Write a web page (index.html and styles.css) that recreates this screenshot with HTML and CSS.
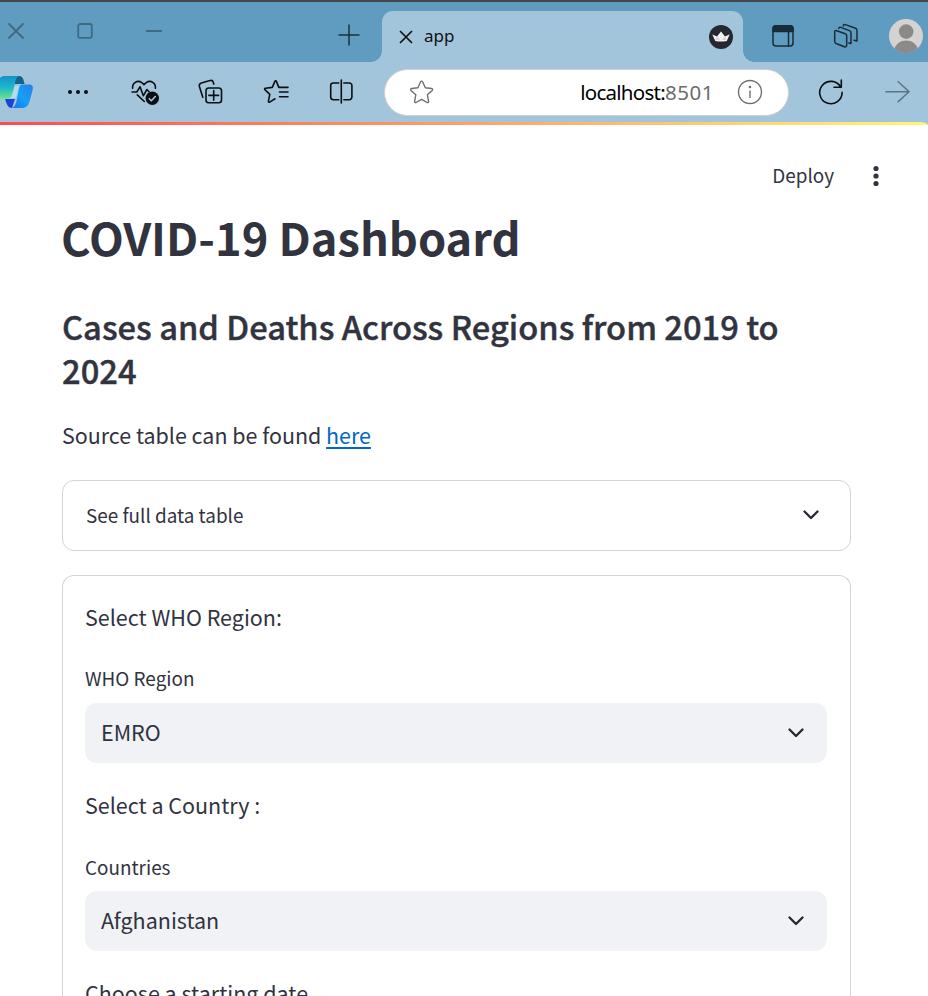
FILE: index.html
```html
<!DOCTYPE html>
<html lang="en">
<head>
<meta charset="utf-8">
<title>app</title>
<link rel="stylesheet" href="styles.css">
</head>
<body>
<div class="window">
  <div class="tabstrip">
    <div class="controls">
      <svg class="dim" width="16" height="16" viewBox="0 0 16 16"><path d="M1 1l14 14M15 1L1 15"/></svg>
      <svg class="dim" width="16" height="16" viewBox="0 0 16 16"><rect x="1.2" y="1" width="13.6" height="13.8" rx="1.8"/></svg>
      <svg class="dim" width="16" height="16" viewBox="0 0 16 16"><path d="M.5 8h15"/></svg>
    </div>
    <svg class="new-tab" width="22" height="22" viewBox="0 0 22 22"><path d="M11 .5v21M.5 11h21"/></svg>
    <div class="tab">
      <svg class="close" width="14" height="14" viewBox="0 0 14 14"><path d="M1 1l12 12M13 1L1 13"/></svg>
      <span class="tab-title">app</span>
      <svg width="24" height="24" viewBox="709 25 24 24"><circle cx="721" cy="37" r="12" fill="#262730"/><path d="M712.300 34.500l4.700 2.100 4-5.200 4 5.200 4.700-2.300-2.900 6.700q-5.700 1-11.500 0z" fill="#f3f3f4"/><path d="M717 36.600l3 3.200-4.500.2zM725 36.600l-3 3.200 4.500.2z" fill="#d3d3d7"/></svg>
    </div>
    <svg class="ink panel" width="24" height="24" viewBox="771 24 24 24"><rect x="773" y="25.700" width="20" height="20.300" rx="3"/><path d="M773 31.500v-2.800a3 3 0 0 1 3-3h14a3 3 0 0 1 3 3v2.800z" fill="#182c38"/><path d="M788.500 31v15"/></svg>
    <svg class="ink spaces" width="26" height="26" viewBox="833 23 26 26"><path d="M836 30.500l9.300 3.300a2 2 0 0 1 1.400 1.900v9.600a1.600 1.600 0 0 1-2.200 1.500l-8.500-3.300a2 2 0 0 1-1.300-1.900v-9.800a1.100 1.100 0 0 1 1.300-1.300zM838.700 28.500c.2-1.300 1-1.500 2.100-1.100l8.700 3.200a2.200 2.200 0 0 1 1.500 2.100V43.500l-2.200-.5M843.300 26c.1-1.600.9-1.800 2.100-1.400l10.100 3.700a2.200 2.200 0 0 1 1.500 2.100V41l-3-.8"/></svg>
    <svg class="avatar" width="34" height="34" viewBox="0 0 34 34"><circle cx="17" cy="17" r="17" fill="#d5d3d2"/><circle cx="17.200" cy="12.600" r="7.300" fill="#8c8a89"/><path d="M5.500 29.700c1.500-5 6-8.300 11.700-8.300s10.200 3.300 11.600 7.900a17 17 0 0 1-23.300.4z" fill="#8c8a89"/></svg>
  </div>
  <div class="toolbar">
    <svg class="copilot" width="34" height="34" viewBox="0 75 34 34">
      <defs>
        <linearGradient id="ca" x1="0" y1="0" x2="0" y2="1"><stop offset="0" stop-color="#1291cc"/><stop offset=".5" stop-color="#1cb8c8"/><stop offset="1" stop-color="#6ce58a"/></linearGradient>
        <linearGradient id="cb" x1="0" y1="1" x2="1" y2="0"><stop offset="0" stop-color="#1577ee"/><stop offset=".5" stop-color="#15a0f5"/><stop offset="1" stop-color="#2b7de8"/></linearGradient>
      </defs>
      <path d="M14 76h5c3 0 4.500 2 5.500 8h-10z" fill="#13638c"/>
      <path d="M5 99h10l-3 9c-4 0-5-3-7-9z" fill="#1b43d4"/>
      <path d="M0 78c1-1.500 3-2 5-2h15c-3 0-4 3-5 7l-3 11c-1 4-2 5-6 5H0z" fill="url(#ca)"/>
      <path d="M22 84.500h7c3.500 0 4.500 2 3.500 6l-3 11c-1.500 5-4 6.500-8 6.500h-10c3-.5 4-3 5-7l2-10c.7-4 1-6 3.500-6.500z" fill="url(#cb)"/>
      <path d="M15.500 86h4c-1.500 2-2.500 9-4 12h-4.500c1.500-3 3-9 4.500-12z" fill="#b3dcec"/>
    </svg>
    <svg class="dots" width="24" height="8" viewBox="0 0 24 8"><circle cx="4" cy="4" r="2"/><circle cx="12" cy="4" r="2"/><circle cx="20" cy="4" r="2"/></svg>
    <svg class="line heart" width="30" height="30" viewBox="130 77 30 30"><path d="M132.600 88.300c-.5-5 4.500-9 9.200-5.600l2.200 1.900 2.200-1.900c4.800-3.300 9.700.7 9.200 5.600M132 92h4.800l3.300-5.200 3.200 9 3.600-6.300 2.300 2.500M137.300 94.800l7 6.700"/><circle cx="152.300" cy="98.300" r="6.700" fill="#0b0f12" stroke="none"/><path d="M149.300 98.700l2 2 4-4.200" stroke="#a3c5db"/></svg>
    <svg class="line coll" width="28" height="30" viewBox="196 77 28 30"><rect x="206" y="88" width="15.500" height="14.800" rx="2.700"/><path d="M213.700 90.500v9.800M208.900 95.400h9.700M202.800 97.200l-3.400-10.700c-.5-1.800.2-3 1.900-3.600l8.700-2.400c1.600-.5 2.700.1 3.200 1.600l.6 2"/></svg>
    <svg class="line favs" width="28" height="30" viewBox="262 77 28 30"><path d="M279.500 87.500l-.7-.1-2.400-6c-.3-.8-1.200-.8-1.500 0l-2.600 6-6.900.8c-.8.100-1.100 1-.5 1.500l4.900 4.700-1.400 6.700c-.2.900.6 1.400 1.300 1l5.300-3.300M279.500 87.400h8.500M279.500 92h8.500M279.500 96.700h8.500"/></svg>
    <svg class="line split" width="28" height="30" viewBox="327 77 28 30"><path d="M338.800 83h-5.500a2.600 2.600 0 0 0-2.600 2.600v11.500a2.600 2.600 0 0 0 2.600 2.600h5.500M343.800 83h5.500a2.600 2.600 0 0 1 2.600 2.600v11.500a2.600 2.600 0 0 1-2.600 2.600h-5.500M341.300 80v23"/></svg>
    <div class="address">
      <svg class="grey" width="26" height="26" viewBox="409 79 26 26"><path d="M420.600 81.800c.4-.9 1.600-.9 2 0l2.700 5.900 6.300.8c1 .2 1.300 1.200.6 1.900l-4.800 4.400 1.200 6.500c.2 1-.7 1.600-1.500 1.200l-5.500-3.200-5.500 3.200c-.9.400-1.700-.2-1.500-1.200l1.200-6.500-4.800-4.400c-.7-.7-.4-1.700.6-1.900l6.300-.8z"/></svg>
      <span class="url">localhost:<span class="port">8501</span></span>
      <svg class="grey" width="26" height="26" viewBox="0 0 26 26"><circle cx="13" cy="13" r="11.500"/><path d="M13 11.500v7.500"/><circle cx="13" cy="8" r=".6"/></svg>
    </div>
    <svg class="line reload" width="28" height="28" viewBox="817 78 28 28"><path d="M840.800 87.300a11.200 11.200 0 1 0 1.300 5M841.300 80v7.300H834"/></svg>
    <svg class="forward" width="26" height="26" viewBox="884 78 26 26"><path d="M885.300 90.700H909M897.700 80.300l11.300 10.400-11.300 10.400"/></svg>
  </div>
  <div class="viewport-edge"><div class="stripe"></div></div>
  <div class="app">
    <header class="app-bar">
      <span class="deploy">Deploy</span>
      <svg class="menu" width="8" height="24" viewBox="0 0 8 24"><circle cx="4" cy="4.500" r="2.600"/><circle cx="4" cy="12" r="2.600"/><circle cx="4" cy="19.500" r="2.600"/></svg>
    </header>
    <main class="content">
      <h1>COVID-19 Dashboard</h1>
      <h2>Cases and Deaths Across Regions from 2019 to 2024</h2>
      <p class="source">Source table can be found <a href="#">here</a></p>
      <div class="expander">
        <span>See full data table</span>
        <svg class="chev" width="16" height="10" viewBox="0 0 16 10"><path d="M1.500 1.500L8 8l6.500-6.500"/></svg>
      </div>
      <section class="form">
        <p class="prompt">Select WHO Region:</p>
        <label class="region-label">WHO Region</label>
        <div class="select"><span>EMRO</span><svg class="chev" width="16" height="10" viewBox="0 0 16 10"><path d="M1.500 1.500L8 8l6.500-6.500"/></svg></div>
        <p class="prompt">Select a Country :</p>
        <label class="country-label">Countries</label>
        <div class="select"><span>Afghanistan</span><svg class="chev" width="16" height="10" viewBox="0 0 16 10"><path d="M1.500 1.500L8 8l6.500-6.500"/></svg></div>
        <p class="prompt">Choose a starting date</p>
      </section>
    </main>
  </div>
</div>
</body>
</html>
```
FILE: styles.css
```css
* { box-sizing: border-box; }
body { margin: 0; background: #fff; color: #31333f; font-family: "Noto Sans CJK SC", "Noto Sans", sans-serif; }
svg { display: block; flex: none; fill: none; }
.window { height: 996px; overflow: hidden; }

.tabstrip { display: flex; align-items: center; height: 62px; border-top: 2px solid #444649; background: #609cbf; padding: 7px 0 0 9px; }
.controls { display: flex; gap: 53px; margin: -9px 1px 0 -1px; }
.dim { stroke: #3f6a83; stroke-width: 1.8; stroke-linecap: round; }
.new-tab { margin: -1px 0 0 175px; stroke: #1d303b; stroke-width: 1.5; }
.tab { position: relative; display: flex; align-items: center; align-self: flex-end; width: 361px; height: 51px; margin-left: 22px; padding: 0 10px 0 17px; background: #a3c5db; border-radius: 11px 11px 0 0; }
.tab::before, .tab::after { content: ""; position: absolute; bottom: 0; width: 11px; height: 11px; }
.tab::before { left: -11px; background: radial-gradient(circle at 0 0, transparent 10.500px, #a3c5db 11px); }
.tab::after { right: -11px; background: radial-gradient(circle at 100% 0, transparent 10.500px, #a3c5db 11px); }
.close { stroke: #111; stroke-width: 1.7; }
.tab-title { flex: 1; margin: 0 0 2px 11px; font: 17px/24px "Noto Sans", sans-serif; color: #111; }
.ink { stroke: #182c38; stroke-width: 1.5; stroke-linejoin: round; stroke-linecap: round; }
.panel { margin-left: 28px; }
.spaces { margin-left: 38px; }
.avatar { margin-left: 30px; }

.toolbar { display: flex; align-items: center; height: 60px; background: #a3c5db; }
.line { stroke: #0b0f12; stroke-width: 1.6; stroke-linecap: round; stroke-linejoin: round; }
.dots { margin-left: 32px; fill: #0b0f12; }
.heart { margin-left: 40px; }
.coll { margin-left: 36px; }
.favs { margin-left: 38px; }
.split { margin-left: 37px; }
.address { display: flex; align-items: center; width: 405px; height: 47px; margin-left: 29px; padding: 0 25px 0 24px; border: 1px solid #cfd0d2; border-radius: 24px; background: #fff; }
.grey { stroke: #6f6f6f; stroke-width: 1.4; stroke-linejoin: round; }
.url { flex: 1; margin-right: 23px; text-align: right; font: 20.500px/28px "Noto Sans", sans-serif; letter-spacing: -.75px; color: #000; }
.port { letter-spacing: .55px; color: #6b6b6b; }
.reload { margin-left: 28px; }
.forward { margin-left: 39px; stroke: #5e7482; stroke-width: 1.5; }

.viewport-edge { background: #a3c5db; }
.stripe { height: 3px; border-top-right-radius: 8px 3px; background: linear-gradient(90deg, #ff4b4b, #ffa86a 55%, #fff57a); }

.app-bar { display: flex; align-items: center; justify-content: flex-end; height: 50px; margin-top: 26px; padding-right: 48px; }
.deploy { margin: -2px 38px 0 0; font-size: 18.900px; line-height: 30px; }
.menu { fill: #31333f; }
.content { width: 789px; margin-left: 62px; }
h1, h2, p { margin: 0; }
h1 { margin: 9px 0 0 -1px; font-size: 45.200px; line-height: 54px; font-weight: 700; }
h2 { margin-top: 40px; font-size: 32.700px; line-height: 44px; font-weight: 500; -webkit-text-stroke: .4px #31333f; }
.source { margin-top: 25px; font-size: 21.450px; line-height: 36px; }
a { color: #0068c9; text-decoration-thickness: 2px; text-underline-offset: 3px; }
.expander { display: flex; align-items: center; justify-content: space-between; height: 71px; margin-top: 27px; padding: 0 31px 2px 23px; border: 1px solid #d3d4d7; border-radius: 12px; font-size: 18.900px; }
.form { height: 460px; margin-top: 24px; padding: 23px 23px 0 22px; border: 1px solid #d3d4d7; border-bottom: 0; border-radius: 12px 12px 0 0; }
.prompt { font-size: 21.500px; line-height: 36px; }
label { display: block; font-size: 18.900px; line-height: 30px; }
.region-label { margin-top: 28px; }
.country-label { margin-top: 29px; }
.select { display: flex; align-items: center; justify-content: space-between; height: 60px; margin: 10px 0 24px; padding: 0 23px 0 16px; background: #f0f2f6; border-radius: 12px; font-size: 21.500px; line-height: 36px; }
.select span { margin-bottom: 2px; }
.country-label + .select { margin-top: 9px; }
.chev { stroke: #262730; stroke-width: 2.300; stroke-linecap: round; stroke-linejoin: round; }
```
